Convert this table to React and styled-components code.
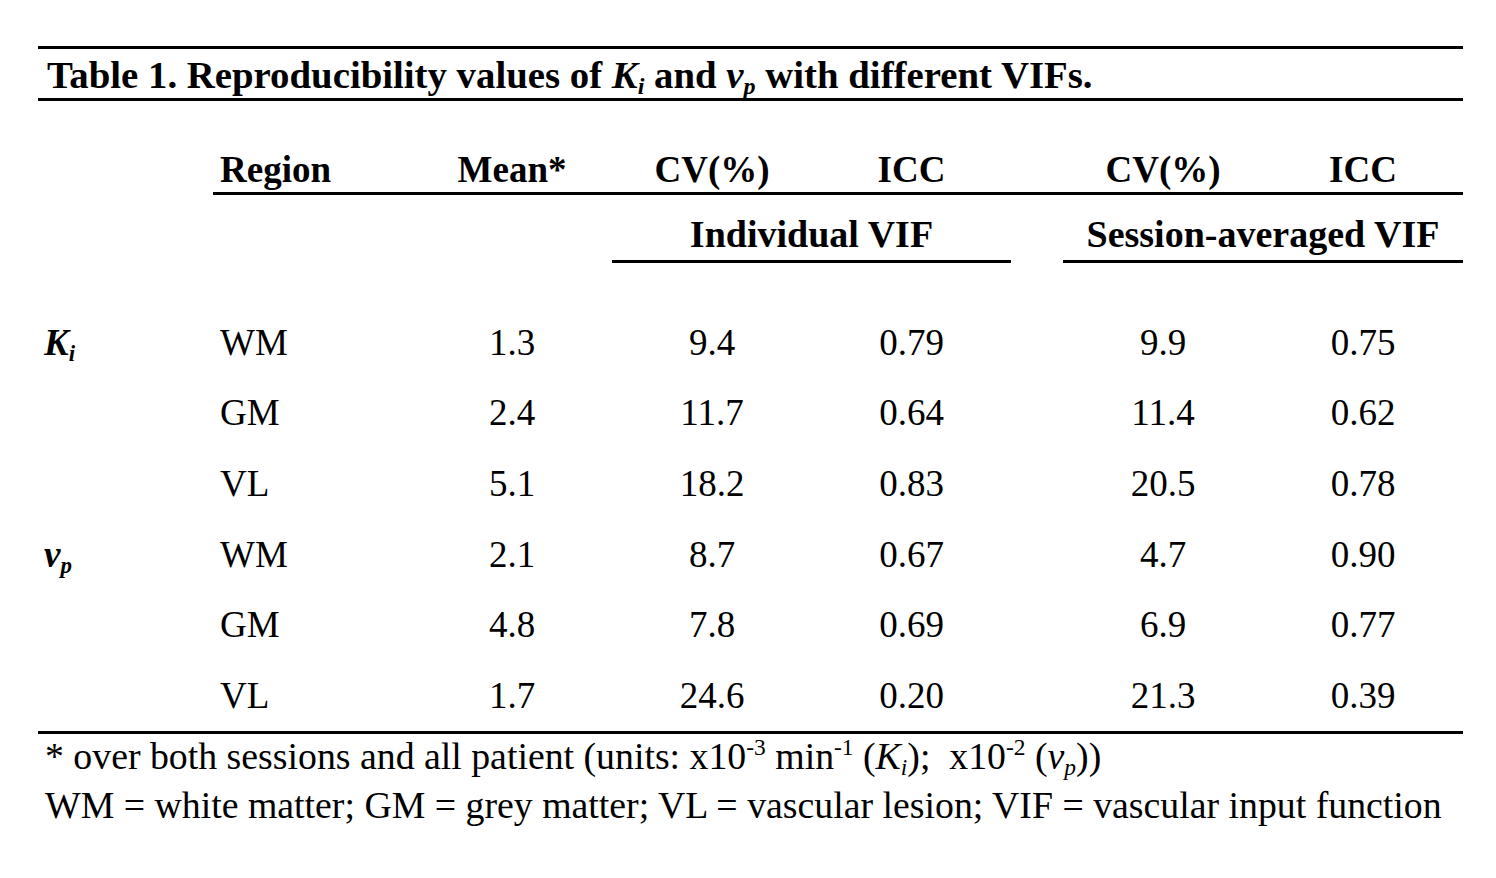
import React from 'react';
import styled, { createGlobalStyle } from 'styled-components';

const GlobalStyle = createGlobalStyle`
  body {
    margin: 0;
    background: #ffffff;
    color: #000000;
    font-family: "Liberation Serif", "DejaVu Serif", serif;
  }
`

const COLS = '175px 199px 200px 200px 199px 52px 200px 200px';

const Page = styled.div`
  width: 1425px;
  padding: 46px 0 0 38px;
`
const Caption = styled.div`
  border-top: 3px solid #000;
  border-bottom: 3px solid #000;
  display: flex;
  align-items: center;
  padding: 2px 0 0 9px;
  box-sizing: border-box;
  height: 55px;
  font-size: 38.8px;
  font-weight: bold;
  white-space: nowrap;
`
const Row = styled.div`
  display: grid;
  grid-template-columns: ${COLS};
  height: ${(p) => p.$h}px;
  margin-top: ${(p) => p.$mt || 0}px;
`
const HeadCell = styled.div`
  display: flex;
  align-items: flex-end;
  justify-content: ${(p) => (p.$left ? 'flex-start' : 'center')};
  padding: 0 0 ${(p) => p.$pb ?? 1}px ${(p) => (p.$left ? 7 : 0)}px;
  font-size: ${(p) => p.$fs || 37}px;
  font-weight: bold;
  border-bottom: ${(p) => (p.$rule ? '3px solid #000' : 'none')};
  grid-column: ${(p) => p.$span || 'auto'};
  white-space: nowrap;
`
const Cell = styled.div`
  display: flex;
  align-items: center;
  justify-content: ${(p) => (p.$left ? 'flex-start' : 'center')};
  padding-left: ${(p) => (p.$left ? p.$pl || 7 : 0)}px;
  font-size: 37px;
  font-weight: ${(p) => (p.$bold ? 'bold' : 'normal')};
  white-space: nowrap;
`
const Sym = styled.span`
  font-style: italic;
`
const Sub = styled.sub`
  font-size: 0.62em;
  vertical-align: -0.25em;
  line-height: 0;
`
const Sup = styled.sup`
  font-size: 0.62em;
  vertical-align: 0.6em;
  line-height: 0;
`
const BottomRule = styled.div`
  border-top: 3px solid #000;
`
const Notes = styled.div`
  padding: 0 0 0 7px;
  margin-top: -2px;
  font-size: 37.8px;
  line-height: 49px;
  white-space: nowrap;
`

const rows = [
  { p: ['K', 'i'], region: 'WM', v: ['1.3', '9.4', '0.79', '9.9', '0.75'] },
  { region: 'GM', v: ['2.4', '11.7', '0.64', '11.4', '0.62'] },
  { region: 'VL', v: ['5.1', '18.2', '0.83', '20.5', '0.78'] },
  { p: ['v', 'p'], region: 'WM', v: ['2.1', '8.7', '0.67', '4.7', '0.90'] },
  { region: 'GM', v: ['4.8', '7.8', '0.69', '6.9', '0.77'] },
  { region: 'VL', v: ['1.7', '24.6', '0.20', '21.3', '0.39'] },
];

function App() {
  return (
    <>
      <GlobalStyle />
      <Page>
        <Caption>
          Table 1. Reproducibility values of&nbsp;<Sym>K<Sub>i</Sub></Sym>&nbsp;and&nbsp;<Sym>v<Sub>p</Sub></Sym>&nbsp;with different VIFs.
        </Caption>
        <Row $h={94}>
          <HeadCell />
          <HeadCell $rule $left>Region</HeadCell>
          <HeadCell $rule>Mean*</HeadCell>
          <HeadCell $rule>CV(%)</HeadCell>
          <HeadCell $rule>ICC</HeadCell>
          <HeadCell $rule />
          <HeadCell $rule>CV(%)</HeadCell>
          <HeadCell $rule>ICC</HeadCell>
        </Row>
        <Row $h={68}>
          <HeadCell $span="4 / 6" $rule $pb={4} $fs={38}>Individual VIF</HeadCell>
          <HeadCell $span="7 / 9" $rule $pb={4} $fs={38}>Session-averaged VIF</HeadCell>
        </Row>
        <Row $h={0} $mt={44} />
        {rows.map((r, i) => (
          <Row key={i} $h={70.6}>
            <Cell $left $pl={6} $bold>
              {r.p && <Sym>{r.p[0]}<Sub>{r.p[1]}</Sub></Sym>}
            </Cell>
            <Cell $left>{r.region}</Cell>
            <Cell>{r.v[0]}</Cell>
            <Cell>{r.v[1]}</Cell>
            <Cell>{r.v[2]}</Cell>
            <Cell />
            <Cell>{r.v[3]}</Cell>
            <Cell>{r.v[4]}</Cell>
          </Row>
        ))}
        <BottomRule />
        <Notes>
          <div>
            * over both sessions and all patient (units: x10<Sup>-3</Sup>&nbsp;min<Sup>-1</Sup> (<Sym>K<Sub>i</Sub></Sym>);&nbsp; x10<Sup>-2</Sup> (<Sym>v<Sub>p</Sub></Sym>))
          </div>
          <div>WM = white matter; GM = grey matter; VL = vascular lesion; VIF = vascular input function</div>
        </Notes>
      </Page>
    </>
  );
}

export default App;
